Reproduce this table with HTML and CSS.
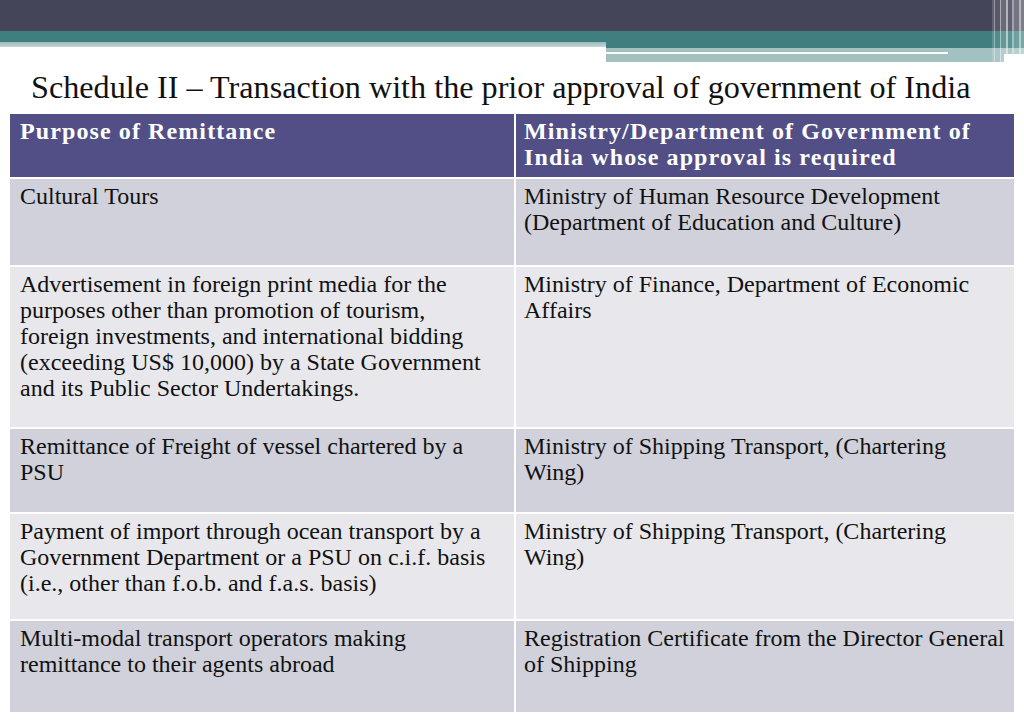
FILE: index.html
```html
<!DOCTYPE html>
<html lang="en">
<head>
<meta charset="utf-8">
<title>Schedule II</title>
<link rel="stylesheet" href="styles.css">
</head>
<body>
<div class="slide">
  <header class="banner">
    <div class="bar-dark"></div>
    <div class="bar-teal"></div>
    <div class="bar-row">
      <div class="bar-left"></div>
      <div class="bar-right">
        <div class="br-teal"></div>
        <div class="br-light"></div>
        <div class="br-white"></div>
        <div class="br-light2"></div>
      </div>
    </div>
    <div class="stripes"></div>
  </header>
  <h1 class="title">Schedule II – Transaction with the prior approval of government of India</h1>
  <table class="sched">
    <thead>
      <tr class="r-head">
        <th>Purpose of Remittance</th>
        <th>Ministry/Department of Government of<br>India whose approval is required</th>
      </tr>
    </thead>
    <tbody>
      <tr class="r1 odd">
        <td>Cultural Tours</td>
        <td>Ministry of Human Resource Development<br>(Department of Education and Culture)</td>
      </tr>
      <tr class="r2 even">
        <td>Advertisement in foreign print media for the<br>purposes other than promotion of tourism,<br>foreign investments, and international bidding<br>(exceeding US$ 10,000) by a State Government<br>and its Public Sector Undertakings.</td>
        <td>Ministry of Finance, Department of Economic<br>Affairs</td>
      </tr>
      <tr class="r3 odd">
        <td>Remittance of Freight of vessel chartered by a<br>PSU</td>
        <td>Ministry of Shipping Transport, (Chartering<br>Wing)</td>
      </tr>
      <tr class="r4 even">
        <td>Payment of import through ocean transport by a<br>Government Department or a PSU on c.i.f. basis<br>(i.e., other than f.o.b. and f.a.s. basis)</td>
        <td>Ministry of Shipping Transport, (Chartering<br>Wing)</td>
      </tr>
      <tr class="r5 odd">
        <td>Multi-modal transport operators making<br>remittance to their agents abroad</td>
        <td>Registration Certificate from the Director General<br>of Shipping</td>
      </tr>
    </tbody>
  </table>
</div>
</body>
</html>
```

FILE: styles.css
```css
* { box-sizing: border-box; }
html, body { margin: 0; padding: 0; background: #ffffff; }
.slide {
  width: 1024px;
  height: 724px;
  overflow: hidden;
  font-family: "Liberation Serif", "DejaVu Serif", serif;
  color: #111111;
}
.banner { position: relative; height: 62px; }
.bar-dark { height: 31px; background: #454559; }
.bar-teal { height: 11px; background: #3f7f80; }
.bar-row { display: flex; height: 20px; }
.bar-left {
  width: 606px;
  height: 5px;
  background: linear-gradient(#9fb8b9, #c3d6d6);
}
.bar-right { flex: 1; display: flex; flex-direction: column; }
.br-teal { height: 6px; background: #3f7f80; }
.br-light { height: 4px; background: #a3c1c1; }
.br-white { height: 2px; background: linear-gradient(90deg, #ffffff 0 342px, #a3c1c1 342px); }
.br-light2 { height: 8px; width: 398px; background: #a3c1c1; }
.stripes {
  position: absolute;
  top: 0;
  right: 0;
  width: 32px;
  height: 64px;
  background: linear-gradient(90deg,
    rgba(255,255,255,0.15) 0 2px,
    rgba(255,255,255,0.45) 2px 3px,
    rgba(255,255,255,0.1) 3px 8px,
    rgba(255,255,255,0.55) 8px 9px,
    rgba(255,255,255,0.2) 9px 14px,
    rgba(255,255,255,0.6) 14px 16px,
    rgba(255,255,255,0.15) 16px 20px,
    rgba(255,255,255,0.5) 20px 22px,
    rgba(255,255,255,0.25) 22px 27px,
    rgba(255,255,255,0.6) 27px 29px,
    rgba(255,255,255,0.3) 29px 32px);
}
.title {
  margin: 6px 0 0 31px;
  height: 46px;
  font-size: 32.2px;
  font-weight: normal;
  line-height: 38px;
  color: #111111;
  white-space: nowrap;
}
.sched {
  margin-left: 10px;
  width: 1004px;
  border-collapse: collapse;
  table-layout: fixed;
  font-size: 24px;
  line-height: 26px;
}
.sched th, .sched td {
  text-align: left;
  vertical-align: top;
  padding: 4px 6px 0 8px;
  border: 2px solid #ffffff;
  white-space: nowrap;
}
.sched tr > :first-child { width: 505px; border-left: 0; padding-left: 10px; }
.sched tr > :last-child { border-right: 0; }
.sched thead th { border-top: 0; }
.r-head { background: #524f86; color: #ffffff; height: 64px; }
.r-head th { font-weight: bold; letter-spacing: 1.1px; }
.odd { background: #d0d1da; }
.even { background: #e8e8ec; }
.r1 { height: 88px; }
.r2 { height: 162px; }
.r3 { height: 85px; }
.r4 { height: 107px; }
.r5 { height: 93px; }
```
